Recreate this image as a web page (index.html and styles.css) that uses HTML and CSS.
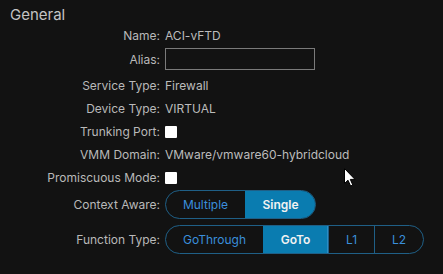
FILE: index.html
```html
<!DOCTYPE html>
<html lang="en">
  <head>
    <meta charset="UTF-8" />
    <meta name="viewport" content="width=device-width, initial-scale=1.0" />
    <title>General</title>
    <link rel="stylesheet" href="styles.css">
  </head>
  <body>
    <div class="panel">
      <h2>General</h2>
      <div class="form">
        <div class="row">
          <span class="label">Name:</span>
          <span class="value">ACI-vFTD</span>
        </div>
        <div class="row row-alias">
          <label class="label" for="alias">Alias:</label>
          <input type="text" id="alias" class="text-input" />
        </div>
        <div class="row row-service">
          <span class="label">Service Type:</span>
          <span class="value">Firewall</span>
        </div>
        <div class="row">
          <span class="label">Device Type:</span>
          <span class="value">VIRTUAL</span>
        </div>
        <div class="row">
          <span class="label">Trunking Port:</span>
          <span class="check"></span>
        </div>
        <div class="row">
          <span class="label">VMM Domain:</span>
          <span class="value">VMware/vmware60-hybridcloud</span>
        </div>
        <div class="row">
          <span class="label">Promiscuous Mode:</span>
          <span class="check"></span>
        </div>
        <div class="row row-seg">
          <span class="label">Context Aware:</span>
          <div class="segmented">
            <button class="seg-multiple">Multiple</button>
            <button class="seg-single active">Single</button>
          </div>
        </div>
        <div class="row row-seg row-func">
          <span class="label">Function Type:</span>
          <div class="segmented">
            <button class="seg-gothrough">GoThrough</button>
            <button class="seg-goto active">GoTo</button>
            <button class="seg-l1">L1</button>
            <button class="seg-l2">L2</button>
          </div>
        </div>
      </div>

      <!-- mouse pointer from the capture -->
      <svg class="cursor" width="12" height="19" viewBox="0 0 12 19">
        <path d="M0.5 0.5 L0.5 15.5 L4 12.2 L6.6 18 L8.8 17 L6.3 11.4 L11 11.4 Z"
              fill="#fff" stroke="#000" stroke-width="1" stroke-linejoin="round" />
      </svg>
    </div>
  </body>
</html>
```

FILE: styles.css
```css
body {
  margin: 0;
  background-color: #121212;
  font-family: Inter, "Open Sans", sans-serif;
  color: #b9b9b9;
  height: 100vh;
  overflow: hidden;
}

.panel {
  position: relative;
  padding-top: 5px;
}

.panel h2 {
  margin: 0 0 0 10px;
  font-size: 15px;
  font-weight: 400;
  line-height: 19px;
  color: #c4c4c4;
}

.row {
  display: flex;
  align-items: center;
  height: 23px;
  font-size: 12px;
}

.label {
  width: 160px;
  text-align: right;
  margin-right: 5px;
  flex-shrink: 0;
}

.value {
  color: #bcbcbc;
}

.row-alias {
  height: 24px;
}

.row-service {
  margin-top: 3px;
}

.text-input {
  width: 150px;
  height: 22px;
  box-sizing: border-box;
  background: #121212;
  border: 1px solid #7a7a7a;
  border-radius: 0;
  padding: 0 4px;
  color: #ddd;
  font: inherit;
}

.check {
  width: 12px;
  height: 12px;
  background: #fff;
  border-radius: 1px;
}

.row-seg {
  height: 29px;
  margin-top: 1px;
}

.row-func {
  margin-top: 6px;
}

.segmented {
  display: flex;
  height: 29px;
  box-sizing: border-box;
  border: 1px solid #1f5f86;
  border-radius: 15px;
  overflow: hidden;
}

.segmented button {
  background: transparent;
  border: none;
  border-left: 1px solid #1f5f86;
  color: #3a8fdc;
  font-family: inherit;
  font-size: 12px;
  padding: 0;
  height: 100%;
  cursor: pointer;
}

.segmented button:first-child {
  border-left: none;
}

.segmented button.active {
  background-color: #0a7cb0;
  border-left-color: #0a7cb0;
  color: #f2f2f2;
  font-weight: 600;
}

.seg-multiple { width: 79px; }
.seg-single { width: 70px; }
.seg-gothrough { width: 97px; }
.seg-goto { width: 65px; }
.seg-l1 { width: 46px; }
.seg-l2 { width: 49px; }

.seg-goto.active {
  border-right: 1px solid #2c8cc4;
}

.cursor {
  position: absolute;
  left: 344px;
  top: 168px;
}
```
